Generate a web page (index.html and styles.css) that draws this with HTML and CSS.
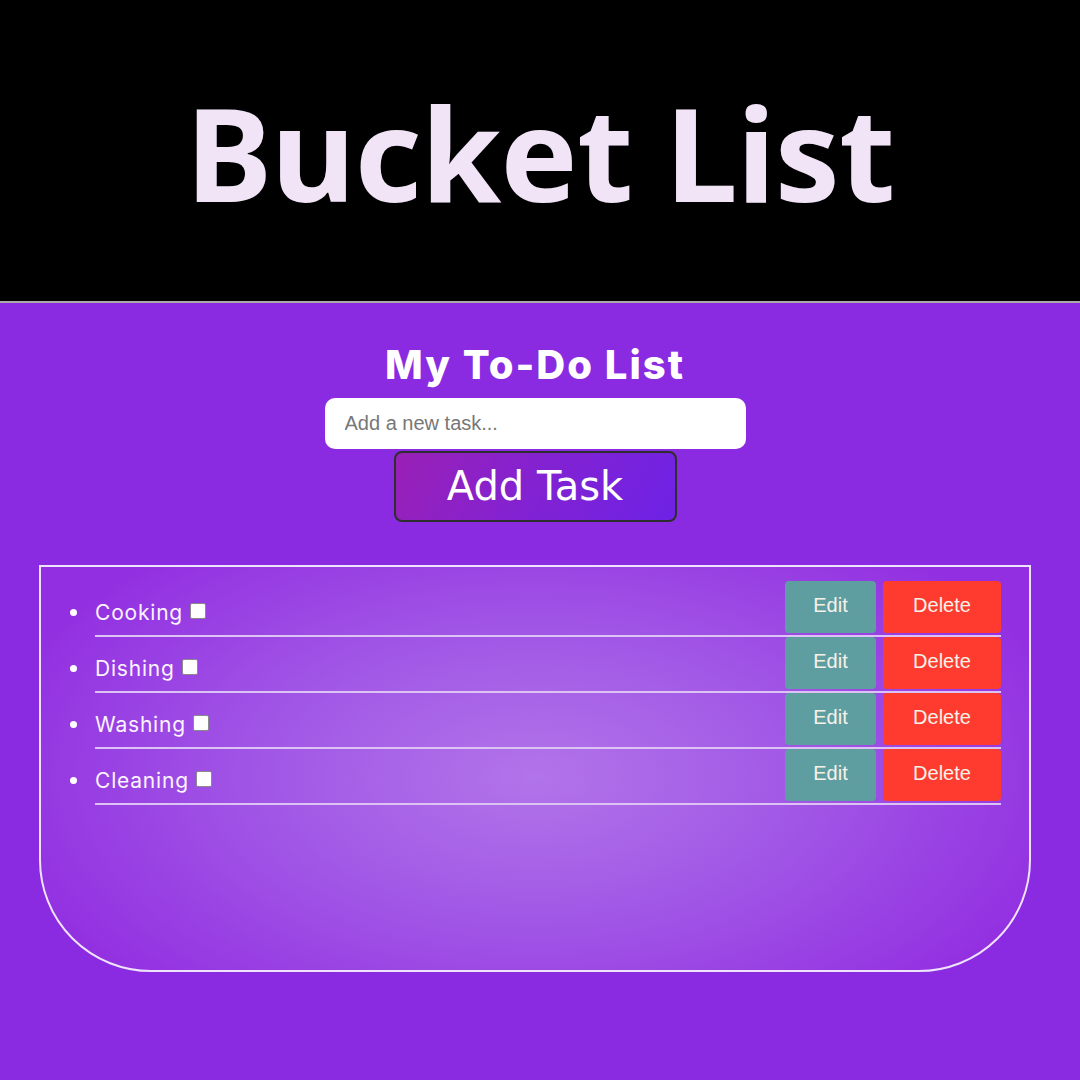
FILE: index.html
```html
<!DOCTYPE html>
<html lang="en">
<head>
<meta charset="utf-8">
<title>Bucket List</title>
<link rel="stylesheet" href="styles.css">
</head>
<body>
<header class="banner">
  <h1 class="banner-title">Bucket List</h1>
</header>
<main class="app">
  <h2 class="app-title">My To-Do List</h2>
  <input class="task-input" type="text" placeholder="Add a new task...">
  <button class="add-btn">Add Task</button>
  <section class="list-box">
    <ul class="task-list">
      <li class="task">
        <span class="task-name">Cooking</span><span class="check"></span>
        <span class="spacer"></span>
        <button class="btn edit">Edit</button><button class="btn delete">Delete</button>
      </li>
      <li class="task">
        <span class="task-name">Dishing</span><span class="check"></span>
        <span class="spacer"></span>
        <button class="btn edit">Edit</button><button class="btn delete">Delete</button>
      </li>
      <li class="task">
        <span class="task-name">Washing</span><span class="check"></span>
        <span class="spacer"></span>
        <button class="btn edit">Edit</button><button class="btn delete">Delete</button>
      </li>
      <li class="task">
        <span class="task-name">Cleaning</span><span class="check"></span>
        <span class="spacer"></span>
        <button class="btn edit">Edit</button><button class="btn delete">Delete</button>
      </li>
    </ul>
  </section>
</main>
</body>
</html>
```
FILE: styles.css
```css
* { box-sizing: border-box; }
html, body { margin: 0; padding: 0; }
body {
  width: 1080px;
  height: 1080px;
  overflow: hidden;
  background: #8a2be2;
  font-family: "Noto Sans", sans-serif;
}
.banner {
  height: 303px;
  background: #000;
  border-bottom: 2px solid #a9a9a9;
  display: flex;
  justify-content: center;
  padding-top: 74px;
}
.banner-title {
  margin: 0;
  font-family: "Noto Sans", sans-serif;
  font-weight: 700;
  font-size: 130px;
  line-height: 1.2;
  color: #f0e4f6;
  letter-spacing: -1px;
}
.app {
  display: flex;
  flex-direction: column;
  align-items: center;
  padding-top: 37px;
  padding-right: 10px;
}
.app-title {
  margin: 0;
  font-family: "Inter", sans-serif;
  font-weight: 800;
  font-size: 40px;
  line-height: 50px;
  color: #fff;
  letter-spacing: 2px;
}
.task-input {
  margin-top: 8px;
  width: 421px;
  height: 51px;
  border: none;
  border-radius: 10px;
  background: #fff;
  padding: 0 20px;
  font-family: "Liberation Sans", Arial, sans-serif;
  font-size: 20px;
  outline: none;
}
.task-input::placeholder { color: #777; }
.add-btn {
  margin-top: 2px;
  width: 283px;
  height: 71px;
  border: 2px solid #2e2e2e;
  border-radius: 8px;
  background: linear-gradient(120deg, #9a20b6 0%, #8222d2 50%, #6e22e6 100%);
  color: #fff;
  font-family: "DejaVu Sans", sans-serif;
  font-size: 40px;
  padding: 0 0 2px;
}
.list-box {
  margin-top: 43px;
  width: 992px;
  height: 407px;
  border: 2px solid #efe2fb;
  border-radius: 0 0 112px 112px;
  background: radial-gradient(ellipse 560px 300px at 50% 52%, #b274e9 0%, #a259e6 45%, #922fe1 100%);
  padding: 14px 28px 0 54px;
}
.task-list {
  margin: 0;
  padding: 0;
  list-style: none;
  color: #fff;
}
.task {
  display: flex;
  align-items: center;
  padding-bottom: 2px;
  border-bottom: 2px solid #dcc3f4;
  font-family: "Inter", sans-serif;
  font-size: 21px;
  color: #fbf3ff;
}
.task::before {
  content: "";
  width: 7px;
  height: 7px;
  border-radius: 50%;
  background: #fff;
  margin-left: -25px;
  margin-right: 18px;
  margin-top: 10px;
}
.task-name {
  padding-top: 10px;
  letter-spacing: 0.8px;
}
.check {
  width: 16px;
  height: 16px;
  margin-left: 7px;
  margin-top: 8px;
  background: #fff;
  border: 1px solid #8a8a8a;
  border-radius: 2px;
}
.spacer { flex: 1; }
.btn {
  height: 52px;
  border: none;
  border-radius: 4px;
  font-family: "Liberation Sans", Arial, sans-serif;
  font-size: 20px;
  color: #f7f2e8;
  padding: 0 0 4px;
}
.edit {
  width: 91px;
  background: #5f9ea0;
}
.delete {
  width: 118px;
  margin-left: 7px;
  background: #ff3b30;
}
```
